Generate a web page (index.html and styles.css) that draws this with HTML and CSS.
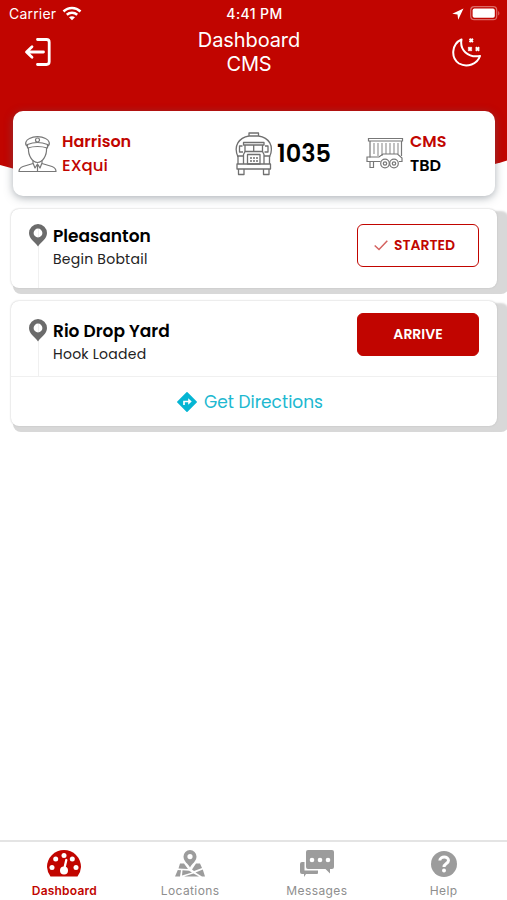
FILE: index.html
```html
<!DOCTYPE html>
<html lang="en">
<head>
  <meta charset="UTF-8" />
  <meta name="viewport" content="width=device-width, initial-scale=1.0"/>
  <title>Dashboard</title>
  <link rel="stylesheet" href="styles.css">
</head>
<body>
  <header class="header">
    <div class="status-bar">
      <div class="carrier">
        <span class="carrier-name">Carrier</span>
        <svg width="20" height="15" viewBox="0 0 20 15" fill="none" stroke="#fff" stroke-width="2.5">
          <path d="M1.5 5.500C6.300.8 13.700.8 18.500 5.500"/>
          <path d="M4.800 8.800c3-2.700 7.400-2.700 10.400 0"/>
          <path d="M10 14.300l-3-3c1.700-1.500 4.300-1.500 6 0z" fill="#fff" stroke="none"/>
        </svg>
      </div>
      <span class="time">4:41 PM</span>
      <div class="indicators">
        <svg width="12" height="12" viewBox="0 0 12 12" fill="#fff"><path d="M11.500.5L.3 5.800l5.200.7.7 5.200z"/></svg>
        <svg width="30" height="15" viewBox="0 0 30 15">
          <rect x=".7" y=".7" width="26" height="13" rx="3.500" fill="none" stroke="#dc6a66" stroke-width="1.200"/>
          <rect x="2.600" y="2.600" width="22.200" height="9.200" rx="1.800" fill="#fff"/>
          <path d="M28.200 5v4.600c1.600-.8 1.600-3.800 0-4.600z" fill="#dc6a66"/>
        </svg>
      </div>
    </div>
    <div class="nav-bar">
      <svg width="28" height="30" viewBox="0 0 28 30" fill="none" stroke="#fff" stroke-width="2.800" stroke-linecap="round" stroke-linejoin="round">
        <path d="M13.500 2.500h9q2.700 0 2.700 2.700v19.600q0 2.700-2.700 2.700h-9M19.500 15H3M8 9.800L2.500 15l5.500 5.200"/>
      </svg>
      <h1 class="title">Dashboard<br>CMS</h1>
      <svg width="30" height="30" viewBox="0 0 30 30" fill="none" stroke="#fff" stroke-width="2">
        <path d="M9.500 2.500C-.5 7-1.500 21 7 26.500c8 4.500 18.500.5 21-7.500C16 21 7.500 13 9.500 2.500z" stroke-linejoin="round"/>
        <path d="M17.500 1.700l3.400 3.400m0-3.400l-3.400 3.400M16.300 10.300l3.400 3.400m0-3.400l-3.400 3.400M23.800 10.300l3.400 3.400m0-3.400l-3.400 3.400"/>
      </svg>
    </div>
  </header>

  <main class="content">
    <section class="summary">
      <div class="driver">
        <svg width="39" height="38" viewBox="0 0 39 38" fill="none" stroke="#777" stroke-width="1.200" stroke-linejoin="round">
          <path d="M9.500 11.500C6 9 8 5 11.500 3.500 16 1 23 1 27.500 3.500 31 5 33 9 29.500 11.500M9.500 9.500q10-4 20 0v3.500q-10-3-20 0zM10.500 13c-.5 8 4 14 9 14.500 5-.5 9.500-6.500 9-14.500"/>
          <circle cx="19.500" cy="5" r="2"/>
          <path d="M15 25.500v3L5 31.500Q1 33 1 36.500h37Q38 33 34 31.500L24 28.500v-3M15 28l2 5 2.500-4 2.500 4 2-5M19.500 29v7.500"/>
        </svg>
        <div class="pair"><span>Harrison</span><span class="surname">EXqui</span></div>
      </div>
      <div class="truck">
        <svg width="38" height="44" viewBox="0 0 38 44" fill="none" stroke="#707070" stroke-width="1.300" stroke-linejoin="round">
          <path d="M3 25C-2 14 4 5.500 14 4V1h9.500v3C34 5.500 39.500 14 34.500 25M14 4h9.500"/>
          <path d="M8.500 10.500h20.500v2.500H8.500zM10 13v6.500h17.500V13M18.700 13v6.500M7.500 14H4.500v6H8M30 14h3v6h-3.500"/>
          <path d="M10 19.500l-1.500 3v9.500M27.500 19.500l1.500 3v9.500M12.500 22.500h12.500V32H12.500z"/>
          <path d="M15 26h2M18 26h2M21 26h2M15 29h2M18 29h2M21 29h2" stroke-width="1.600"/>
          <path d="M8.500 24H3v8M29 24h5.500v8M2 32h33.500v5H2zM3.500 37v5.500h5.500V37M28.500 37v5.500H34V37"/>
        </svg>
        <strong class="truck-number">1035</strong>
      </div>
      <div class="trailer">
        <svg width="38" height="34" viewBox="0 0 38 34" fill="none" stroke="#777" stroke-width="1.200">
          <path d="M2.500 1.500h34V4h-34zM4 4v16.500M35.500 4v15"/>
          <path d="M8 6v11M12 6v13M16 6v13M20 6v11M24 6v11M28 6v11M32 6v11" stroke="#999"/>
          <path d="M4 20h9l4-3h14.500l4.500 4v3.500h-3M14.500 24.500H1V20h3M4 24.500v6h3.500v-6"/>
          <circle cx="19" cy="26.500" r="4.300"/><circle cx="19" cy="26.500" r="1.700"/>
          <circle cx="28" cy="26.500" r="4.300"/><circle cx="28" cy="26.500" r="1.700"/>
        </svg>
        <div class="pair"><span>CMS</span><span class="dark">TBD</span></div>
      </div>
    </section>

    <section class="stop">
      <div class="stop-row">
        <div class="marker">
          <svg width="18" height="23" viewBox="0 0 18 23"><path d="M9 0a9 9 0 0 0-9 9c0 6 6 9 9 13.500C12 18 18 15 18 9a9 9 0 0 0-9-9zm0 4.600a4.400 4.400 0 1 1 0 8.800 4.400 4.400 0 0 1 0-8.800z" fill="#6b6b6b"/></svg>
        </div>
        <div class="stop-text">
          <h2>Pleasanton</h2>
          <p>Begin Bobtail</p>
        </div>
        <button class="btn started">
          <svg width="14" height="11" viewBox="0 0 14 11" fill="none" stroke="#d4625f" stroke-width="1.500"><path d="M.7 5.500l4.300 4L13.300.8"/></svg>
          <span>STARTED</span>
        </button>
      </div>
    </section>

    <section class="stop next">
      <div class="stop-row">
        <div class="marker">
          <svg width="18" height="23" viewBox="0 0 18 23"><path d="M9 0a9 9 0 0 0-9 9c0 6 6 9 9 13.500C12 18 18 15 18 9a9 9 0 0 0-9-9zm0 4.600a4.400 4.400 0 1 1 0 8.800 4.400 4.400 0 0 1 0-8.800z" fill="#6b6b6b"/></svg>
        </div>
        <div class="stop-text">
          <h2>Rio Drop Yard</h2>
          <p>Hook Loaded</p>
        </div>
        <button class="btn arrive"><span>ARRIVE</span></button>
      </div>
      <a class="directions" href="#">
        <svg width="20" height="20" viewBox="0 0 20 20"><path d="M10 .8L19.200 10 10 19.200.8 10z" fill="#05b5d3" stroke="#05b5d3" stroke-width="1.500" stroke-linejoin="round"/><path d="M7 13V9.500h5" fill="none" stroke="#fff" stroke-width="1.700"/><path d="M11.200 6.300l3.500 3.200-3.500 3.200z" fill="#fff"/></svg>
        <span>Get Directions</span>
      </a>
    </section>
  </main>

  <nav class="tab-bar">
    <a class="tab active" href="#">
      <svg width="34" height="28" viewBox="0 0 34 28">
        <path d="M3.500 26.500A17 17 0 0 1 0 17a17 17 0 0 1 34 0 17 17 0 0 1-3.500 9.500z" fill="#c10500"/>
        <g fill="#fff"><circle cx="5" cy="17.500" r="2.500"/><circle cx="8.700" cy="9" r="2.500"/><circle cx="17" cy="5.500" r="2.500"/><circle cx="25.300" cy="9" r="2.500"/><circle cx="29" cy="17.500" r="2.500"/><circle cx="17" cy="20.500" r="4"/></g>
        <path d="M17 20l2.300-10" stroke="#fff" stroke-width="2.300" stroke-linecap="round"/>
      </svg>
      <span>Dashboard</span>
    </a>
    <a class="tab" href="#">
      <svg width="30" height="28" viewBox="0 0 30 28" fill="#9c9c9c">
        <path d="M15 0a6.500 6.500 0 0 0-6.500 6.500c0 5 4.500 7 6.500 11 2-4 6.500-6 6.500-11A6.500 6.500 0 0 0 15 0zm0 4a2.600 2.600 0 1 1 0 5.200A2.600 2.600 0 0 1 15 4z" fill-rule="evenodd"/>
        <path d="M5 13.500h4l4 5.500-9.500-.5zM21 13.500h4l2 4.500-8 3-2-1.500zM2.800 20l3.200.2-1 6.300H0zM7.500 20.300l6.500.5 3 1.700-10 3zM18.500 23.500l5.500 3H9zM27.800 19.500L30 26.500h-3l-6.500-4z"/>
      </svg>
      <span>Locations</span>
    </a>
    <a class="tab" href="#">
      <svg width="34" height="28" viewBox="0 0 34 28" fill="#9c9c9c">
        <path d="M8 0h24q2 0 2 2v15q0 2-2 2h-2v4.500L25.500 19H8q-2 0-2-2V2q0-2 2-2z"/>
        <path d="M2 12h2.500v8.500H18V23q0 1-1 1H6l-2 3v-3H2q-2 0-2-2v-8q0-2 2-2z"/>
        <g fill="#fff"><circle cx="12" cy="10" r="2.300"/><circle cx="20" cy="10" r="2.300"/><circle cx="28" cy="10" r="2.300"/></g>
      </svg>
      <span>Messages</span>
    </a>
    <a class="tab" href="#">
      <svg width="28" height="28" viewBox="0 0 28 28">
        <circle cx="14" cy="14" r="13" fill="#9c9c9c"/>
        <path d="M9.800 10.500C10 5.800 18.500 5.800 18.500 10.500c0 3-4.500 3-4.500 6.500" fill="none" stroke="#fff" stroke-width="3"/><circle cx="14" cy="20.500" r="2" fill="#fff"/>
      </svg>
      <span>Help</span>
    </a>
  </nav>
</body>
</html>
```
FILE: styles.css
```css
* {
  box-sizing: border-box;
}

body {
  margin: 0;
  height: 900px;
  display: flex;
  flex-direction: column;
  background: #fff;
  font-family: 'Poppins', 'Inter', 'Liberation Sans', sans-serif;
  overflow: hidden;
}

svg {
  display: block;
  flex: none;
}

.header {
  height: 174px;
  color: #fff;
  background: #c10500;
  clip-path: ellipse(450px 197px at 48.5% 0);
}

.status-bar {
  display: grid;
  grid-template-columns: 1fr auto 1fr;
  align-items: center;
  height: 27px;
  padding: 0 7px 0 9px;
  font-family: 'Inter', sans-serif;
  font-size: 13px;
}

.carrier,
.indicators {
  display: flex;
  align-items: center;
  gap: 6px;
}

.carrier-name {
  font-size: 14px;
  letter-spacing: 0.2px;
}

.indicators {
  justify-content: flex-end;
}

.time {
  font-weight: 500;
  font-size: 14px;
  letter-spacing: 0.4px;
}

.nav-bar {
  display: flex;
  justify-content: space-between;
  align-items: center;
  height: 50px;
  padding: 0 25px 0 24px;
}

.title {
  margin: 0;
  padding-right: 6px;
  font-family: 'Inter', sans-serif;
  font-size: 20px;
  font-weight: 400;
  line-height: 24px;
  letter-spacing: -0.1px;
  text-align: center;
}

.content {
  flex: 1;
  margin-top: -63px;
}

.summary {
  position: relative;
  display: grid;
  grid-template-columns: 217px 131px 1fr;
  align-items: center;
  height: 85px;
  margin: 0 12px 0 13px;
  padding-left: 5px;
  background: #fff;
  border-radius: 10px;
  box-shadow: 0 2px 8px rgba(90, 100, 110, 0.5);
}

.driver,
.truck,
.trailer {
  display: flex;
  align-items: center;
  gap: 5px;
}

.truck {
  gap: 4px;
}

.trailer {
  gap: 6px;
}

.pair {
  display: flex;
  flex-direction: column;
  font-size: 16px;
  font-weight: 600;
  line-height: 24px;
  color: #c10500;
}

.surname {
  font-size: 16.5px;
  font-weight: 500;
}

.dark {
  color: #000;
}

.truck-number {
  font-size: 24px;
  font-weight: 600;
}

.stop {
  margin: 13px 10px 0 11px;
  background: #fff;
  border-radius: 8px;
  box-shadow: 0 0 2px #bbb, 2px 6px 0 #d8d8d8, 12px 6px 0 #d8d8d8, 12px 2px 2px #d8d8d8;
}

.stop-row {
  display: flex;
  align-items: flex-start;
  height: 79px;
  padding: 15px 18px 0;
}

.next .stop-row {
  height: 75px;
  padding-top: 18px;
}

.marker {
  width: 18px;
  height: 100%;
  margin-right: 6px;
  background: linear-gradient(#f0f0f0, #f0f0f0) center / 1px 100% no-repeat;
}

.stop-text {
  flex: 1;
}

.stop-text h2,
.stop-text p {
  margin: 0;
  white-space: nowrap;
}

.stop-text h2 {
  font-size: 17px;
  font-weight: 600;
  line-height: 24px;
}

.stop-text p {
  font-size: 14px;
  line-height: 22px;
  letter-spacing: 0.25px;
  color: #222;
}

.btn {
  display: flex;
  align-items: center;
  justify-content: center;
  gap: 6px;
  width: 122px;
  height: 43px;
  border: 1px solid #c10500;
  border-radius: 6px;
  font-family: inherit;
  font-size: 14px;
  font-weight: 600;
}

.started {
  padding: 0 13px 0 6px;
  color: #c10500;
  background: #fff;
}

.arrive {
  margin-top: -6px;
  color: #fff;
  background: #c10500;
}

.directions {
  display: flex;
  align-items: center;
  justify-content: center;
  gap: 7px;
  height: 50px;
  padding-right: 8px;
  border-top: 1px solid #f0f0f0;
  font-size: 17px;
  color: #20b8d0;
  text-decoration: none;
}

.tab-bar {
  display: grid;
  grid-template-columns: repeat(4, 1fr);
  height: 60px;
  padding-top: 8px;
  border-top: 2px solid #e4e4e4;
}

.tab {
  display: flex;
  flex-direction: column;
  align-items: center;
  gap: 5px;
  font-family: 'Inter', sans-serif;
  font-size: 12px;
  line-height: 16px;
  letter-spacing: 0.4px;
  color: #8e8e8e;
  text-decoration: none;
}

.active {
  padding-left: 2px;
  font-weight: 600;
  letter-spacing: 0.2px;
  color: #c10500;
}
```
